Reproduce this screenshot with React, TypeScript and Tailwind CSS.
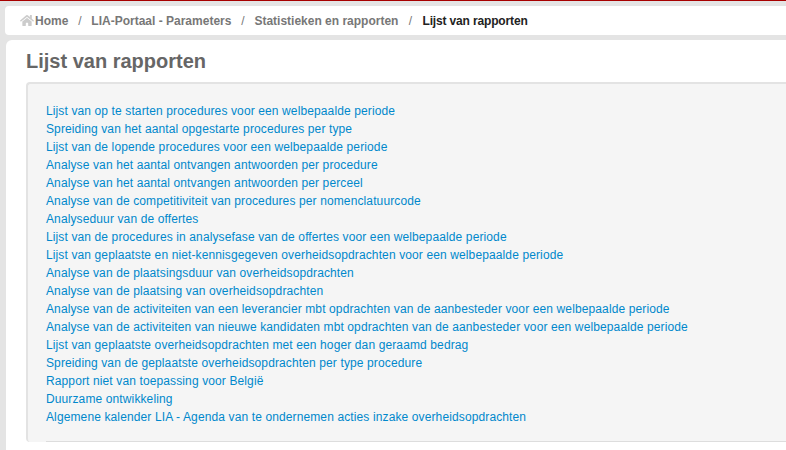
import { FaHome } from 'react-icons/fa';

const reports = [
    'Lijst van op te starten procedures voor een welbepaalde periode',
    'Spreiding van het aantal opgestarte procedures per type',
    'Lijst van de lopende procedures voor een welbepaalde periode',
    'Analyse van het aantal ontvangen antwoorden per procedure',
    'Analyse van het aantal ontvangen antwoorden per perceel',
    'Analyse van de competitiviteit van procedures per nomenclatuurcode',
    'Analyseduur van de offertes',
    'Lijst van de procedures in analysefase van de offertes voor een welbepaalde periode',
    'Lijst van geplaatste en niet-kennisgegeven overheidsopdrachten voor een welbepaalde periode',
    'Analyse van de plaatsingsduur van overheidsopdrachten',
    'Analyse van de plaatsing van overheidsopdrachten',
    'Analyse van de activiteiten van een leverancier mbt opdrachten van de aanbesteder voor een welbepaalde periode',
    'Analyse van de activiteiten van nieuwe kandidaten mbt opdrachten van de aanbesteder voor een welbepaalde periode',
    'Lijst van geplaatste overheidsopdrachten met een hoger dan geraamd bedrag',
    'Spreiding van de geplaatste overheidsopdrachten per type procedure',
    'Rapport niet van toepassing voor België',
    'Duurzame ontwikkeling',
    'Algemene kalender LIA - Agenda van te ondernemen acties inzake overheidsopdrachten',
];

const crumbs = ['LIA-Portaal - Parameters', 'Statistieken en rapporten'];

export default function App() {
    return (
        <div className="h-[450px] w-[786px] overflow-hidden bg-[#e4e4e4] font-['Liberation_Sans',Arial,sans-serif] text-[12px] leading-[18px]">
            <div className="h-px bg-[#a80000]" />

            {/* Breadcrumb */}
            <div className="ml-[5px] mt-[5px] flex h-[29px] items-center rounded-l-[4px] bg-white pl-[15px] font-bold text-[#777777]">
                <FaHome className="mr-[1px] h-[13px] w-[14px] text-[#cccccc]" />
                <span>Home</span>
                {crumbs.map((crumb) => (
                    <span key={crumb} className="flex">
                        <span className="w-[23px] text-center font-normal">/</span>
                        <span>{crumb}</span>
                    </span>
                ))}
                <span className="w-[24px] text-center font-normal">/</span>
                <span className="tracking-[-0.15px] text-[#222222]">Lijst van rapporten</span>
            </div>

            {/* Content */}
            <div className="ml-[6px] mt-[5px] h-[500px] rounded-l-[6px] bg-white pl-[20px]">
                <h1 className="pt-[8px] text-[20px] font-bold leading-[26px] text-[#666666]">Lijst van rapporten</h1>
                <div className="mt-[8px] rounded-l-[4px] border-l-2 border-t-2 border-[#e3e3e3] bg-[#f5f5f5] pl-[18px] pt-[18px]">
                    <ul>
                        {reports.map((report) => (
                            <li key={report}>
                                <a href="#" className="whitespace-nowrap tracking-[0.12px] text-[#0088cc]">{report}</a>
                            </li>
                        ))}
                    </ul>
                    <hr className="mt-[15px] border-t border-[#dddddd]" />
                </div>
            </div>
        </div>
    );
}
